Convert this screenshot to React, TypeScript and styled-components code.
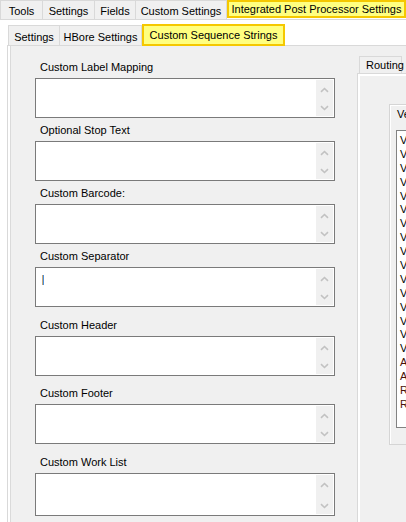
import React from "react";
import styled, { css, createGlobalStyle } from "styled-components";

const GlobalStyle = createGlobalStyle`
  html, body { margin: 0; padding: 0; background: #ffffff; }
  body { font-family: "Liberation Sans", Arial, sans-serif; font-size: 11px; color: #000; }
  * { box-sizing: border-box; }
`;

const Root = styled.div`
  width: 406px;
  height: 522px;
  overflow: hidden;
  display: flex;
  flex-direction: column;
  background: #fff;
`;

const TabRow = styled.div<{ $h: number; $pl?: number }>`
  display: flex;
  align-items: flex-start;
  height: ${(p) => p.$h}px;
  padding-left: ${(p) => p.$pl ?? 0}px;
  flex-shrink: 0;
  position: relative;
  z-index: 1;
`;

const Tab = styled.div<{ $w: number; $h: number; $sel?: boolean; $mt?: number }>`
  flex-shrink: 0;
  width: ${(p) => p.$w}px;
  height: ${(p) => p.$h}px;
  margin-top: ${(p) => p.$mt ?? 0}px;
  display: flex;
  align-items: center;
  justify-content: center;
  white-space: nowrap;
  font-size: 11px;
  color: #000;
  ${(p) =>
    p.$sel
      ? css`
          background: #ffff80;
          border: 2px solid #f5c800;
        `
      : css`
          padding-top: 2px;
          background: #f0f0f0;
          border: 1px solid #d9d9d9;
          border-bottom: none;
          &:not(:first-child) {
            border-left: none;
          }
        `}
`;

const OuterPage = styled.div`
  flex: 1;
  display: flex;
  flex-direction: column;
  border-top: 1px solid #d9d9d9;
  padding: 5px 0 0 7px;
  background: #fff;
`;

const InnerPage = styled.div`
  flex: 1;
  display: flex;
  border-top: 1px solid #d9d9d9;
  border-left: 1px solid #d9d9d9;
  padding-left: 2px;
  background: #fff;
`;

const Panel = styled.div`
  flex: 1;
  display: flex;
  background: #f0f0f0;
  border-left: 1px solid #dadada;
`;

const LeftCol = styled.div`
  width: 346px;
  flex-shrink: 0;
  display: flex;
  flex-direction: column;
  padding-left: 24px;
`;

const Field = styled.div<{ $mt: number }>`
  display: flex;
  flex-direction: column;
  margin-top: ${(p) => p.$mt}px;
`;

const Label = styled.div`
  height: 14px;
  line-height: 14px;
  margin-bottom: 4px;
  padding-left: 5px;
  white-space: nowrap;
`;

const TextBox = styled.div<{ $h: number }>`
  width: 300px;
  height: ${(p) => p.$h}px;
  border: 1px solid #7a7a7a;
  background: #fff;
  display: flex;
  padding: 1px;
`;

const TextArea = styled.div`
  flex: 1;
  padding: 6px 5px;
`;

const Caret = styled.div`
  width: 2px;
  height: 10px;
  margin-left: 0px;
  background: linear-gradient(to right, #c9a678 0 50%, #4a90dc 50% 100%);
`;

const Scroll = styled.div`
  width: 17px;
  background: #f0f0f0;
  display: flex;
  flex-direction: column;
  justify-content: space-between;
  align-items: center;
  padding: 5px 0 4px;
`;

const ArrowBox = styled.div`
  width: 17px;
  height: 9px;
  display: flex;
  align-items: center;
  justify-content: center;
`;

const Chevron = ({ down }: { down?: boolean }) => (
  <svg width="9" height="6" viewBox="0 0 9 6">
    <path
      d={down ? "M1 1.2 L4.5 4.5 L8 1.2" : "M1 4.8 L4.5 1.5 L8 4.8"}
      fill="none"
      stroke="#c2c2c2"
      strokeWidth="1.6"
    />
  </svg>
);

const RightCol = styled.div`
  flex: 1;
  display: flex;
  flex-direction: column;
  padding-top: 10px;
  min-width: 0;
`;

const SmallTab = styled.div`
  width: 43px;
  height: 17px;
  margin-left: 2px;
  border: 1px solid #d9d9d9;
  border-bottom: none;
  background: #f0f0f0;
  display: flex;
  align-items: center;
  padding-left: 6px;
  white-space: nowrap;
`;

const RoutingPage = styled.div`
  flex: 1;
  border-top: 1px solid #d9d9d9;
  border-left: 1px solid #d9d9d9;
  box-shadow: inset 2px 2px 0 #ffffff;
  padding: 30px 0 0 31px;
  display: flex;
  flex-direction: column;
  align-items: flex-start;
`;

const GroupBox = styled.div`
  width: 120px;
  height: 341px;
  border: 1px solid #d5d5d5;
  box-shadow: inset 1px 1px 0 #ffffff;
  padding: 2px 0 0 6px;
  display: flex;
  flex-direction: column;
`;

const GroupTitle = styled.div`
  height: 14px;
  line-height: 14px;
  padding-left: 1px;
  margin-bottom: 9px;
  white-space: nowrap;
`;

const ListBox = styled.div`
  width: 100px;
  height: 298px;
  border: 1px solid #828282;
  background: #fff;
  padding: 3px 0 0 3px;
  overflow: hidden;
`;

const ListItem = styled.div<{ $c: string }>`
  height: 13.9px;
  line-height: 13.9px;
  color: ${(p) => p.$c};
  white-space: nowrap;
`;

const fields = [
  { label: "Custom Label Mapping", mt: 14, h: 40 },
  { label: "Optional Stop Text", mt: 5, h: 40 },
  { label: "Custom Barcode:", mt: 5, h: 40 },
  { label: "Custom Separator", mt: 5, h: 40, caret: true },
  { label: "Custom Header", mt: 11, h: 40 },
  { label: "Custom Footer", mt: 10, h: 40 },
  { label: "Custom Work List", mt: 11, h: 43 },
];

const items: { t: string; c: string }[] = [
  ...Array.from({ length: 16 }, (_, i) => ({ t: `V${i + 1} Vertical`, c: "#000000" })),
  { t: "A1 Angle", c: "#4a1208" },
  { t: "A2 Angle", c: "#4a1208" },
  { t: "R1 Router", c: "#4a1208" },
  { t: "R2 Router", c: "#4a1208" },
];

export default function App() {
  return (
    <Root>
      <GlobalStyle />
      <TabRow $h={19}>
        <Tab $w={43} $h={19}>Tools</Tab>
        <Tab $w={52} $h={19}>Settings</Tab>
        <Tab $w={41} $h={19}>Fields</Tab>
        <Tab $w={91} $h={19}>Custom Settings</Tab>
        <Tab $w={179} $h={18} $sel>Integrated Post Processor Settings</Tab>
      </TabRow>
      <OuterPage>
        <TabRow $h={20} $pl={1}>
          <Tab $w={52} $h={20}>Settings</Tab>
          <Tab $w={82} $h={20}>HBore Settings</Tab>
          <Tab $w={143} $h={22} $mt={-1} $sel>Custom Sequence Strings</Tab>
        </TabRow>
        <InnerPage>
          <Panel>
            <LeftCol>
              {fields.map((f) => (
                <Field key={f.label} $mt={f.mt}>
                  <Label>{f.label}</Label>
                  <TextBox $h={f.h}>
                    <TextArea>{f.caret ? <Caret /> : null}</TextArea>
                    <Scroll>
                      <ArrowBox>
                        <Chevron />
                      </ArrowBox>
                      <ArrowBox>
                        <Chevron down />
                      </ArrowBox>
                    </Scroll>
                  </TextBox>
                </Field>
              ))}
            </LeftCol>
            <RightCol>
              <SmallTab>Routing</SmallTab>
              <RoutingPage>
                <GroupBox>
                  <GroupTitle>Vertical Drilling</GroupTitle>
                  <ListBox>
                    {items.map((it, i) => (
                      <ListItem key={i} $c={it.c}>
                        {it.t}
                      </ListItem>
                    ))}
                  </ListBox>
                </GroupBox>
              </RoutingPage>
            </RightCol>
          </Panel>
        </InnerPage>
      </OuterPage>
    </Root>
  );
}
